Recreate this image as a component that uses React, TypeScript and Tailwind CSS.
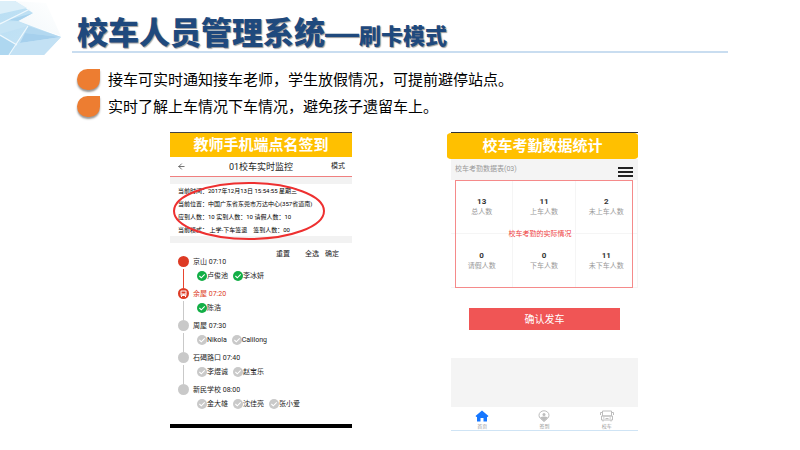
import React, { useState } from 'react';
import { ArrowLeft } from 'lucide-react';

const bullets = [
  '接车可实时通知接车老师，学生放假情况，可提前避停站点。',
  '实时了解上车情况下车情况，避免孩子遗留车上。',
];

const tripInfo = [
  '当前时间：2017年12月13日 15:54:55 星期三',
  '当前位置：中国广东省东莞市万达中心(357省道南)',
  '应到人数：10 实到人数：10 请假人数：10',
  '当前模式： 上学-下车签退　签到人数：00',
];

type Stop = {
  name: string;
  time: string;
  state: 'done' | 'current' | 'next';
  students: string[];
};

const stops: Stop[] = [
  { name: '京山', time: '07:10', state: 'done', students: ['卢俊池', '李冰妍'] },
  { name: '余屋', time: '07:20', state: 'current', students: ['陈浩'] },
  { name: '周屋', time: '07:30', state: 'next', students: ['Nikola', 'Calilong'] },
  { name: '石碣路口', time: '07:40', state: 'next', students: ['李煜诚', '赵宝乐'] },
  { name: '新民学校', time: '08:00', state: 'next', students: ['金大雄', '沈佳亮', '张小爱'] },
];

const stats = [
  { value: 13, label: '总人数' },
  { value: 11, label: '上车人数' },
  { value: 2, label: '未上车人数' },
  { value: 0, label: '请假人数' },
  { value: 0, label: '下车人数' },
  { value: 11, label: '未下车人数' },
];

const CrystalLogo = () => (
  <svg width="62" height="55" viewBox="0 0 62 55" className="shrink-0" aria-hidden="true">
    <defs>
      <linearGradient id="ice" x1="0" y1="0" x2="1" y2="1">
        <stop offset="0" stopColor="#b9def3" />
        <stop offset="1" stopColor="#c9e5f6" />
      </linearGradient>
      <linearGradient id="frost" x1="0" y1="1" x2="1" y2="0">
        <stop offset="0" stopColor="#f1f7fa" />
        <stop offset="1" stopColor="#ffffff" />
      </linearGradient>
    </defs>
    <path d="M13 1 L46 3 L61 36 L18 21 L33 13 Z" fill="url(#frost)" />
    <path d="M0 1 L15 1 L33 13 L18 21 L61 37 L44 55 L0 55 Z" fill="url(#ice)" />
    <path d="M0 1 L15 1 L27 8 L0 14 Z" fill="#dceff9" />
    <path d="M8 20 L33 13 L18 21 Z" fill="#a9d3ee" />
    <path d="M0 22 L18 21 L28 26 L0 34 Z" fill="#c6e4f5" />
    <path d="M28 26 L61 37 L25 33 Z" fill="#b3d8f0" />
    <path d="M25 33 L61 37 L20 43 Z" fill="#a6d0ed" />
    <path d="M20 43 L61 37 L44 55 L10 55 Z" fill="#c3e1f4" />
    <path d="M0 36 L16 45 L10 55 L0 55 Z" fill="#aed7f0" />
    <path d="M0 35 L17 45 M28 26 L9 55 M0 24 L30 9" stroke="#eff8fd" strokeWidth="1.200" fill="none" />
  </svg>
);

const Banner = ({ children }: { children: React.ReactNode }) => (
  <h2 className="bg-[#ffc000] text-center text-[15px] font-bold leading-6 text-white">{children}</h2>
);

const StopMarker = ({ state }: { state: Stop['state'] }) => {
  if (state === 'current') {
    return (
      <svg width="11" height="11" viewBox="0 0 22 22" className="shrink-0" aria-hidden="true">
        <circle cx="11" cy="11" r="11" fill="#dd3a24" />
        <rect x="5" y="5" width="12" height="11" rx="2" fill="#fff" />
        <rect x="7" y="7" width="8" height="4" fill="#dd3a24" />
        <path d="M7 13.500h2M13 13.500h2" stroke="#dd3a24" strokeWidth="1.500" />
        <path d="M7 16v2M15 16v2" stroke="#fff" strokeWidth="2" />
      </svg>
    );
  }
  return (
    <span
      className={`size-[11px] shrink-0 rounded-full ${state === 'done' ? 'bg-[#dd3a24]' : 'bg-[#c9c9c9]'}`}
    />
  );
};

const StudentCheck = ({ name, checked }: { name: string; checked: boolean }) => (
  <label className="flex items-center">
    <span className="grid">
      <input
        type="checkbox"
        defaultChecked={checked}
        className="col-start-1 row-start-1 size-[10px] appearance-none rounded-full bg-[#c9c9c9] checked:bg-[#12ae46]"
      />
      <svg
        viewBox="0 0 10 10"
        className="pointer-events-none col-start-1 row-start-1 size-[10px]"
        aria-hidden="true"
      >
        <path d="M2.400 5 L4.300 6.800 L7.700 3.400" fill="none" stroke="#fff" strokeWidth="1.100" />
      </svg>
    </span>
    {name}
  </label>
);

const RollCallPhone = () => (
  <section className="col-start-2 border-t border-[#444] text-[7px] text-[#222]">
    <Banner>教师手机端点名签到</Banner>

    <div className="grid h-5 grid-cols-[1fr_auto_1fr] items-center border-b border-[#f08080] px-[7px]">
      <button type="button" aria-label="返回">
        <ArrowLeft size={9} strokeWidth={2} className="text-[#444]" />
      </button>
      <h3 className="text-[9px] leading-3">01校车实时监控</h3>
      <button type="button" className="text-right">模式</button>
    </div>

    <div className="relative border-y-[7px] border-[#f2f2f2] px-2 text-[6px] leading-[13px] text-black">
      {tripInfo.map((line) => (
        <p key={line} className="whitespace-nowrap">{line}</p>
      ))}
      {/* hand-drawn highlight over the trip details */}
      <svg
        className="pointer-events-none absolute -top-[3px] left-[2px] h-[60px] w-[154px]"
        viewBox="0 0 154 60"
        aria-hidden="true"
      >
        <ellipse cx="77" cy="30" rx="75" ry="28" fill="none" stroke="#ee3030" strokeWidth="2" />
      </svg>
    </div>

    <div className="flex justify-end pt-[5px] pr-[13px] leading-3">
      <button type="button" className="mr-[15px]">重置</button>
      <button type="button" className="mr-[6px]">全选</button>
      <button type="button">确定</button>
    </div>

    <ul className="-mt-1 pl-2">
      {stops.map((stop, i) => (
        <li key={stop.name} className="flex h-8 gap-1">
          <div className="flex flex-col items-center gap-[2px]">
            <StopMarker state={stop.state} />
            {i < stops.length - 1 && (
              <span className={`w-px flex-1 ${stop.state === 'done' ? 'bg-[#e8452f]' : 'bg-[#c9c9c9]'}`} />
            )}
          </div>
          <div className="whitespace-nowrap">
            <p className={`leading-3 ${stop.state === 'current' ? 'text-[#dd3a24]' : ''}`}>
              {stop.name} {stop.time}
            </p>
            <div className="flex gap-[5px] pt-[2px] pl-1 leading-3">
              {stop.students.map((name) => (
                <StudentCheck key={name} name={name} checked={stop.state !== 'next'} />
              ))}
            </div>
          </div>
        </li>
      ))}
    </ul>
    <div className="mt-2 h-1 bg-black" />
  </section>
);

const HomeIcon = () => (
  <svg viewBox="0 0 28 24" className="h-3 w-[14px]" aria-hidden="true">
    <path d="M14 1 L27 12 L25 14 H24 V23 H17 V16 H11 V23 H4 V14 H3 L1 12 Z" fill="#1677ff" />
  </svg>
);

const PinIcon = () => (
  <svg viewBox="0 0 28 24" className="h-3 w-[14px]" aria-hidden="true">
    <path d="M14 23 L7 17 A10 9 0 1 1 21 17 Z" fill="none" stroke="#bdbdbd" strokeWidth="2" />
    <circle cx="14" cy="9" r="3" fill="#bdbdbd" />
    <path d="M6 15 Q14 11 22 15 L14 23 Z" fill="#bdbdbd" />
  </svg>
);

const BusIcon = () => (
  <svg viewBox="0 0 28 24" className="h-3 w-[14px]" aria-hidden="true">
    <path
      d="M5 2 H23 V12 H5 Z M3 12 H25 V20 H3 Z M5 5 H1 V10 M23 5 H27 V10 M6 20 V23 M22 20 V23 M6 16 H9 M19 16 H22 M11 17 H17"
      fill="none"
      stroke="#bdbdbd"
      strokeWidth="2"
    />
  </svg>
);

const tabs = [
  { id: 'home', label: '首页', Icon: HomeIcon },
  { id: 'sign', label: '签到', Icon: PinIcon },
  { id: 'bus', label: '校车', Icon: BusIcon },
];

const StatsPhone = () => {
  const [tab, setTab] = useState('home');

  return (
    <section className="col-start-4 text-[7px] text-[#999]">
      <div className="ml-1 h-px bg-[#333]" />
      <div className="overflow-hidden rounded-[4px] bg-[#ffc000] py-px">
        <Banner>校车考勤数据统计</Banner>
      </div>

      <div className="ml-1">
        <div className="flex h-[21px] items-center justify-between bg-[#f4f4f4] pr-[5px] pl-1">
          <h3>校车考勤数据表(03)</h3>
          <button type="button" aria-label="菜单" className="flex flex-col gap-[2px] pt-1">
            <span className="h-[2px] w-[15px] bg-[#222]" />
            <span className="h-[2px] w-[15px] bg-[#222]" />
            <span className="h-[2px] w-[15px] bg-[#222]" />
          </button>
        </div>

        <div className="relative">
          <dl className="grid grid-cols-3">
            {stats.map((item) => (
              <div
                key={item.label}
                className="flex h-[54px] flex-col-reverse items-center justify-center border-r border-b border-[#f5f5f5]"
              >
                <dt className="leading-[10px]">{item.label}</dt>
                <dd className="text-[8px] font-bold leading-[11px] text-[#333]">{item.value}</dd>
              </div>
            ))}
          </dl>
          <div className="pointer-events-none absolute inset-y-0 right-[5px] left-1 flex items-center justify-center border border-[#f58a8a]">
            <span className="pr-2 leading-3 text-[#f04040]">校车考勤的实际情况</span>
          </div>
        </div>

        <div className="px-[18px] pt-5 pb-7">
          <button type="button" className="h-[22px] w-full bg-[#f05555] text-[10px] text-white">
            确认发车
          </button>
        </div>

        <div className="h-[49px] bg-[#f4f4f4]" />

        <nav className="grid grid-cols-3 border-b border-[#cfe4f5] pt-[3px]">
          {tabs.map(({ id, label, Icon }) => (
            <button
              key={id}
              type="button"
              aria-pressed={tab === id}
              onClick={() => setTab(id)}
              className="flex flex-col items-center text-[5px] leading-[8px]"
            >
              <Icon />
              {label}
            </button>
          ))}
        </nav>
      </div>
    </section>
  );
};

export default function App() {
  return (
    <main className="min-h-screen bg-white font-['Roboto','Noto_Sans_CJK_SC',sans-serif]" lang="zh-CN">
      <header className="flex items-start">
        <CrystalLogo />
        <div className="mr-[9%] ml-[10px] flex-1 border-b-2 border-[#c9ddf0] pt-3 pl-[5px]">
          <h1 className="h-[39px] font-['Noto_Sans_CJK_SC',sans-serif] text-[31px] font-black leading-[38px] whitespace-nowrap text-[#1f497d] [text-shadow:1px_1px_1px_#999]">
            校车人员管理系统
            <span className="font-['Liberation_Sans',sans-serif] text-[34px] leading-none">—</span>
            <span className="text-[22px]">刷卡模式</span>
          </h1>
        </div>
      </header>

      <ul className="flex flex-col gap-[3px] pt-3 pl-[77px]">
        {bullets.map((text) => (
          <li key={text} className="flex items-center gap-2 text-[15px] leading-6 text-black">
            <span className="h-[21px] w-[23px] shrink-0 rounded-full rounded-tr-none bg-[#ed7d31] shadow-[0_2px_2px_#999]" />
            <span className="font-['Noto_Sans_CJK_SC',sans-serif]">{text}</span>
          </li>
        ))}
      </ul>

      <div className="grid grid-cols-[170fr_182fr_95fr_191fr_162fr] items-start pt-[14px] pb-4">
        <RollCallPhone />
        <StatsPhone />
      </div>
    </main>
  );
}
